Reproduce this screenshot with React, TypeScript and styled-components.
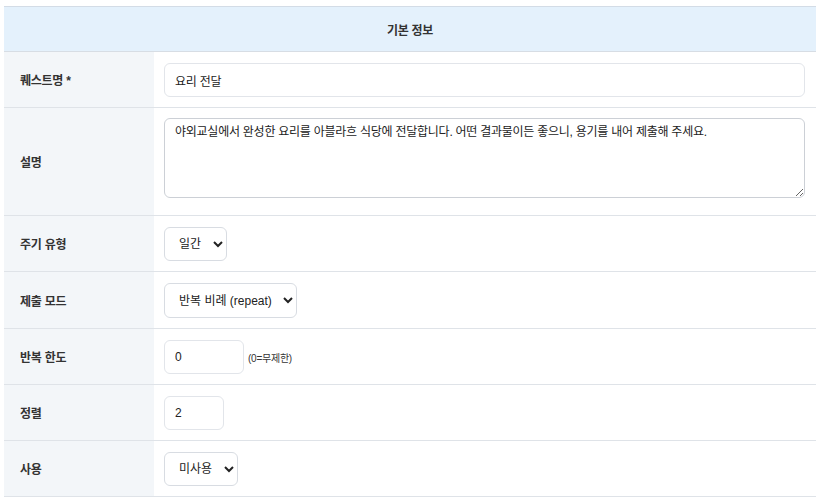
import * as React from "react"
import styled, { createGlobalStyle } from "styled-components"

const GlobalStyle = createGlobalStyle`
    body {
        margin: 0;
        background: #ffffff;
        font-family: "Liberation Sans", "Noto Sans CJK KR", sans-serif;
        color: #222;
    }
`

const Wrapper = styled.div`
    padding: 6px 6px 0 4px;
`

const Table = styled.table`
    width: 100%;
    border-collapse: collapse;
    font-size: 12px;
    letter-spacing: -0.25px;
    border-top: 1px solid #d3dce6;
`

const HeaderCell = styled.th`
    height: 44px;
    padding: 0;
    background: #e4f1fc;
    color: #333;
    font-weight: 700;
    font-size: 12px;
    text-align: center;
    border-bottom: 1px solid #d7dde4;
`

const Row = styled.tr`
    border-bottom: 1px solid #dfe3e8;
`

const LabelCell = styled.th`
    width: 134px;
    padding: 0 0 0 16px;
    background: #f3f6f9;
    color: #333;
    font-weight: 700;
    text-align: left;
    vertical-align: middle;
`

const ValueCell = styled.td<{ tall?: boolean }>`
    padding: ${p => p.tall ? '10px 11px 17px 10px' : '11px 11px 10px 10px'};
    vertical-align: middle;
    background: #fff;
`

const Field = styled.input<{ w?: number }>`
    box-sizing: border-box;
    width: ${p => p.w ? `${p.w}px` : '100%'};
    height: 34px;
    padding: 0 10px;
    border: 1px solid #e2e5ea;
    border-radius: 6px;
    font-family: inherit;
    font-size: 12px;
    letter-spacing: inherit;
    color: #222;
    background: #fff;
    outline: none;
    vertical-align: middle;
`

const TextArea = styled.textarea`
    display: block;
    box-sizing: border-box;
    width: 100%;
    height: 80px;
    padding: 4px 10px;
    border: 1px solid #ccd0d6;
    border-radius: 6px;
    font-family: inherit;
    font-size: 12px;
    letter-spacing: inherit;
    line-height: 18px;
    color: #222;
    resize: vertical;
    outline: none;
`

const Select = styled.select<{ h?: number }>`
    box-sizing: border-box;
    height: ${p => p.h ?? 34}px;
    padding: 0 8px 0 10px;
    border: 1px solid #d8dce2;
    border-radius: 6px;
    font-family: inherit;
    font-size: 12px;
    letter-spacing: 0;
    color: #222;
    background: #fff;
    outline: none;
    vertical-align: middle;
`

const Hint = styled.span`
    margin-left: 4px;
    font-size: 10px;
    color: #333;
    vertical-align: middle;
`

export default function App() {
    const [name, setName] = React.useState('요리 전달')
    const [desc, setDesc] = React.useState('야외교실에서 완성한 요리를 아블라흐 식당에 전달합니다. 어떤 결과물이든 좋으니, 용기를 내어 제출해 주세요.')
    const [limit, setLimit] = React.useState('0')
    const [order, setOrder] = React.useState('2')

    return (
        <Wrapper>
            <GlobalStyle />
            <Table>
                <thead>
                    <tr>
                        <HeaderCell colSpan={2}>기본 정보</HeaderCell>
                    </tr>
                </thead>
                <tbody>
                    <Row>
                        <LabelCell>퀘스트명 *</LabelCell>
                        <ValueCell>
                            <Field value={name} onChange={e => setName(e.target.value)} />
                        </ValueCell>
                    </Row>
                    <Row>
                        <LabelCell>설명</LabelCell>
                        <ValueCell tall>
                            <TextArea value={desc} onChange={e => setDesc(e.target.value)} />
                        </ValueCell>
                    </Row>
                    <Row>
                        <LabelCell>주기 유형</LabelCell>
                        <ValueCell>
                            <Select defaultValue="daily">
                                <option value="daily">일간</option>
                                <option value="weekly">주간</option>
                                <option value="monthly">월간</option>
                            </Select>
                        </ValueCell>
                    </Row>
                    <Row>
                        <LabelCell>제출 모드</LabelCell>
                        <ValueCell>
                            <Select h={35} defaultValue="repeat">
                                <option value="repeat">반복 비례 (repeat)</option>
                                <option value="once">1회 (once)</option>
                            </Select>
                        </ValueCell>
                    </Row>
                    <Row>
                        <LabelCell>반복 한도</LabelCell>
                        <ValueCell>
                            <Field w={80} value={limit} onChange={e => setLimit(e.target.value)} />
                            <Hint>(0=무제한)</Hint>
                        </ValueCell>
                    </Row>
                    <Row>
                        <LabelCell>정렬</LabelCell>
                        <ValueCell>
                            <Field w={60} value={order} onChange={e => setOrder(e.target.value)} />
                        </ValueCell>
                    </Row>
                    <Row>
                        <LabelCell>사용</LabelCell>
                        <ValueCell>
                            <Select defaultValue="off">
                                <option value="on">사용</option>
                                <option value="off">미사용</option>
                            </Select>
                        </ValueCell>
                    </Row>
                </tbody>
            </Table>
        </Wrapper>
    )
}
